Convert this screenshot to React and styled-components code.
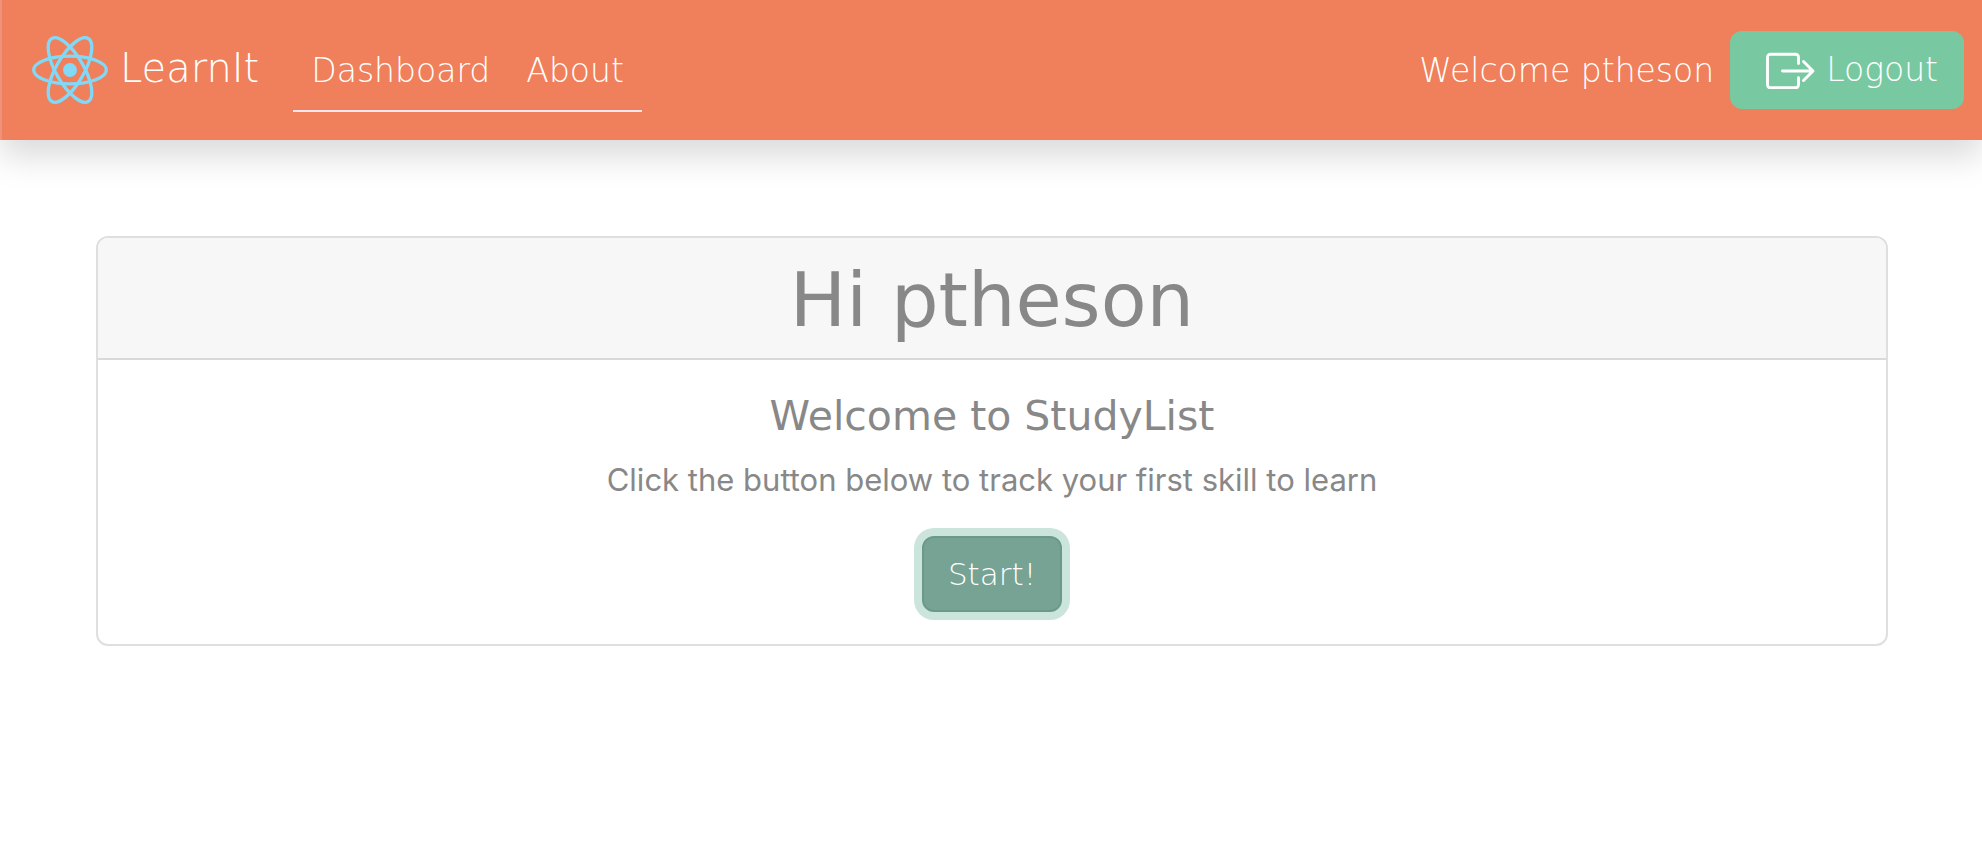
import React from 'react';
import styled, { createGlobalStyle } from 'styled-components';

const display = '"DejaVu Sans", sans-serif';

const GlobalStyle = createGlobalStyle`
  *, *::before, *::after { box-sizing: border-box; }
  body {
    margin: 0;
    background: #fff;
    color: #888;
    font-family: Inter, sans-serif;
    font-size: 31px;
    line-height: 48px;
  }
`;

const Navbar = styled.header`
  display: flex;
  align-items: center;
  height: 140px;
  padding: 0 18px 0 30px;
  border-left: 2px solid #f1917a;
  background: #ef805b;
  box-shadow: 0 16px 32px rgba(0, 0, 0, 0.15);
  color: #fff;
  font: 200 33px/48px ${display};
`;

const Brand = styled.a`
  display: flex;
  align-items: center;
  gap: 12px;
  margin-right: 34px;
  color: inherit;
  font-size: 40px;
  text-decoration: none;
`;

const BrandName = styled.span`
  padding-bottom: 4px;
`;

const Menu = styled.nav`
  display: flex;
  margin: 2px auto 0 0;
  border-bottom: 2px solid #f0e8ee;
`;

const MenuLink = styled.a`
  padding: 17px 18px 15px;
  color: inherit;
  text-decoration: none;
`;

const Greeting = styled.span`
  margin-right: 16px;
  padding-top: 2px;
`;

const Button = styled.button`
  display: inline-flex;
  align-items: center;
  gap: 10px;
  padding: 12px 24px;
  border: 2px solid #78c9a1;
  border-radius: 12px;
  background: #78c9a1;
  color: #fff;
  font: 200 33px/48px ${display};
  cursor: pointer;
`;

const LogoutButton = styled(Button)`
  height: 78px;
  padding-left: 34px;
`;

const StartButton = styled(Button)`
  height: 76px;
  margin-top: 32px;
  border-color: #6d9989;
  background: #76a393;
  box-shadow: 0 0 0 8px #cbe5dc;
  font-size: 31px;
  outline: none;
`;

const Main = styled.main`
  padding: 96px 94px 96px 96px;
`;

const Card = styled.section`
  overflow: hidden;
  border: 2px solid #dfdfdf;
  border-radius: 12px;
  text-align: center;
`;

const CardHeader = styled.div`
  padding: 18px 40px 14px;
  border-bottom: 2px solid #d9d9d9;
  background: #f7f7f7;
`;

const Heading = styled.h1`
  margin: 0;
  font: 400 75px/88px ${display};
`;

const CardBody = styled.div`
  padding: 32px;
`;

const CardTitle = styled.h2`
  margin: 0 0 16px;
  font: 400 41px/48px ${display};
`;

const CardText = styled.p`
  margin: 0;
`;

function ReactLogo() {
  return (
    <svg width="76" height="70" viewBox="-11.5 -10.6 23 21.2" fill="none" stroke="#82d8f7" aria-hidden="true">
      <circle r="2.1" fill="#82d8f7" stroke="none" />
      <ellipse rx="11" ry="4.2" />
      <ellipse rx="11" ry="4.2" transform="rotate(60)" />
      <ellipse rx="11" ry="4.2" transform="rotate(120)" />
    </svg>
  );
}

function LogoutIcon() {
  return (
    <svg
      width="50"
      height="38"
      viewBox="0 0 50 38"
      fill="none"
      stroke="currentColor"
      strokeWidth="2.9"
      strokeLinecap="round"
      strokeLinejoin="round"
      aria-hidden="true"
    >
      <path d="M32.5 12.5V6.2a3 3 0 0 0-3-3h-25a3 3 0 0 0-3 3v27.6a3 3 0 0 0 3 3h25a3 3 0 0 0 3-3v-7" />
      <path d="M16.5 20H47M37.5 10.5l9.5 9.5-9.5 9.5" />
    </svg>
  );
}

export default function App() {
  return (
    <>
      <GlobalStyle />
      <Navbar>
        <Brand href="#home">
          <ReactLogo />
          <BrandName>LearnIt</BrandName>
        </Brand>
        <Menu>
          <MenuLink href="#dashboard">Dashboard</MenuLink>
          <MenuLink href="#about">About</MenuLink>
        </Menu>
        <Greeting>Welcome ptheson</Greeting>
        <LogoutButton type="button">
          <LogoutIcon />
          Logout
        </LogoutButton>
      </Navbar>
      <Main>
        <Card>
          <CardHeader>
            <Heading>Hi ptheson</Heading>
          </CardHeader>
          <CardBody>
            <CardTitle>Welcome to StudyList</CardTitle>
            <CardText>Click the button below to track your first skill to learn</CardText>
            <StartButton type="button">Start!</StartButton>
          </CardBody>
        </Card>
      </Main>
    </>
  );
}
